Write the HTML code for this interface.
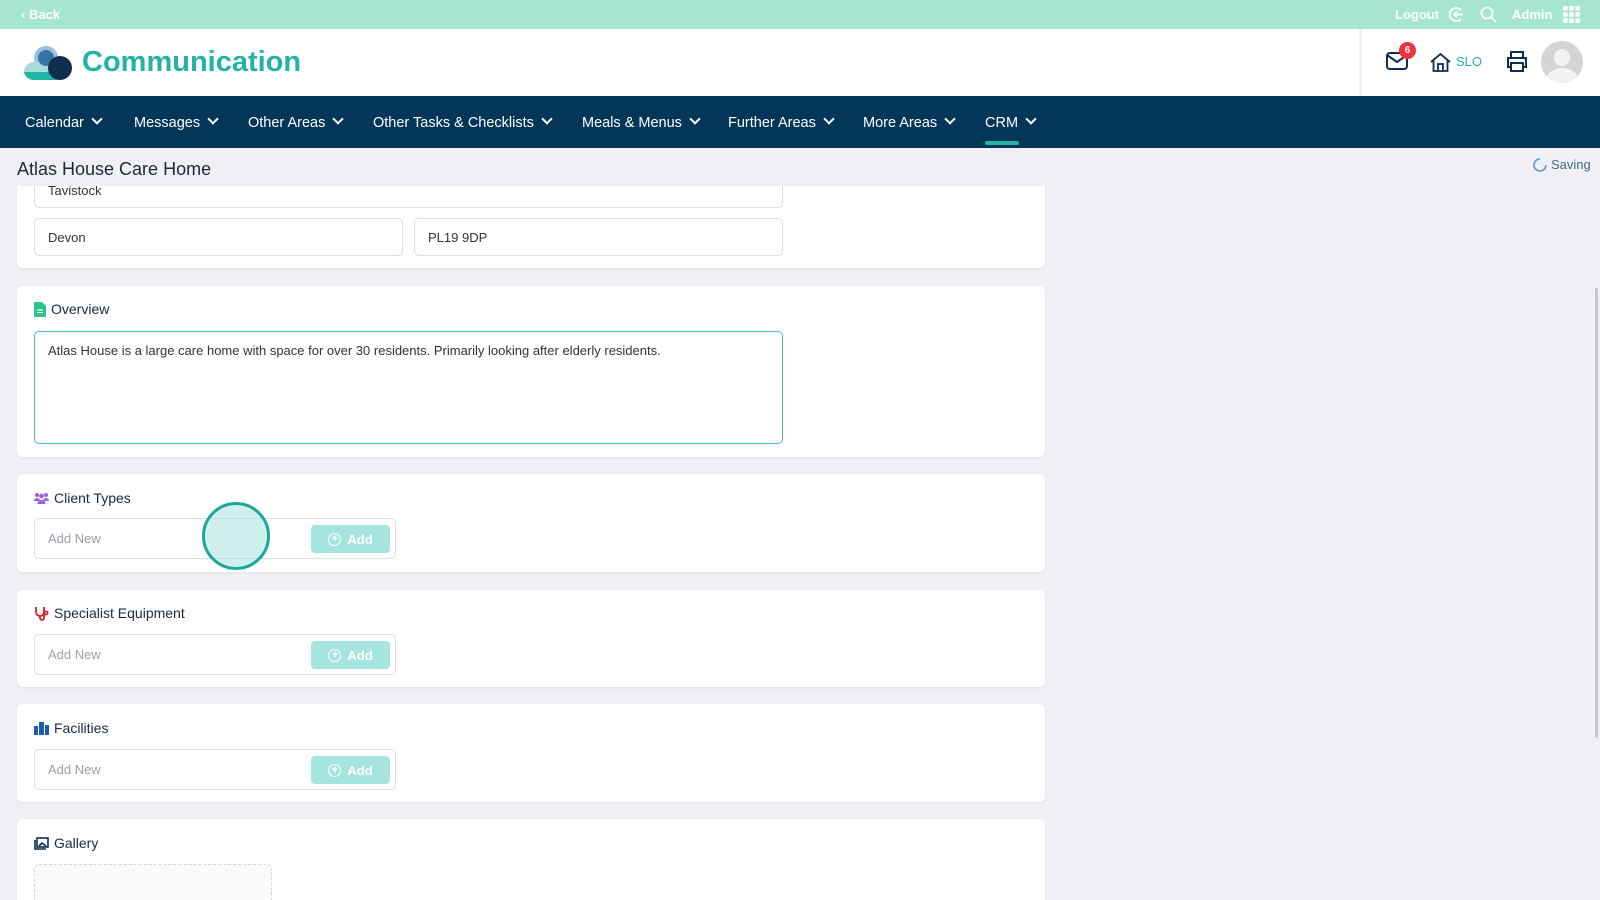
<!DOCTYPE html>
<html><head><meta charset="utf-8"><style>
*{box-sizing:border-box;margin:0;padding:0}
html,body{width:1600px;height:900px;overflow:hidden}
body{background:#f0f0f4;font-family:"Liberation Sans",sans-serif;position:relative;color:#1b2a3a}
.abs{position:absolute}
.top{left:0;top:0;width:1600px;height:29px;background:#a6e6d0;color:#fff;font-size:13px;font-weight:bold}
.hdr{left:0;top:29px;width:1600px;height:67px;background:#fff}
.nav{left:0;top:96px;width:1600px;height:52px;background:#04365a;color:#fff;font-size:14.5px}
.nav span{position:absolute;top:19px;white-space:nowrap}
.nav span:after{content:"";display:inline-block;width:6px;height:6px;border-right:2px solid #fff;border-bottom:2px solid #fff;transform:rotate(45deg);margin-left:9px;position:relative;top:-4px}
.card{position:absolute;left:17px;width:1028px;background:#fff;border-radius:6px;box-shadow:0 1px 3px rgba(0,0,0,.06)}
.inp{position:absolute;background:#fff;border:1px solid #dcdde2;border-radius:5px;font-size:13px;color:#333;padding-left:13px;display:flex;align-items:center}
.h{position:absolute;left:34px;font-size:14px;color:#1b2a3a;display:flex;align-items:center;gap:5px}
.addw{position:absolute;left:34px;width:362px;height:41px;border:1px solid #dcdde2;border-radius:5px;background:#fff}
.addw .ph{position:absolute;left:13px;top:12px;font-size:13px;color:#9aa0a6}
.addw .btn{position:absolute;left:276px;top:6px;width:79px;height:28px;background:#a6e4e0;border-radius:4px;color:#fff;font-size:13px;font-weight:bold;display:flex;align-items:center;justify-content:center;gap:6px}
.addw .btn i{width:13px;height:13px;border:1.5px solid #fff;border-radius:50%;font-style:normal;font-size:11px;line-height:10px;text-align:center}
</style></head><body>
<div class="abs top">
 <span class="abs" style="left:21px;top:7px">‹ Back</span>
 <span class="abs" style="left:1395px;top:7px">Logout</span>
 <svg class="abs" style="left:1448px;top:6px" width="17" height="17" viewBox="0 0 17 17" fill="none" stroke="#fff" stroke-width="1.8"><path d="M13 4A6.5 6.5 0 1 0 13 13"/><path d="M15 8.5H6M9 5.5l-3 3 3 3"/></svg>
 <svg class="abs" style="left:1480px;top:6px" width="17" height="17" viewBox="0 0 17 17" fill="none" stroke="#fff" stroke-width="1.8"><circle cx="7" cy="7" r="5.5"/><path d="M11 11l5 5"/></svg>
 <span class="abs" style="left:1512px;top:7px">Admin</span>
 <svg class="abs" style="left:1563px;top:6px" width="17" height="17" viewBox="0 0 17 17" fill="#fff"><rect x="0" y="0" width="4.5" height="4.5"/><rect x="6.2" y="0" width="4.5" height="4.5"/><rect x="12.4" y="0" width="4.5" height="4.5"/><rect x="0" y="6.2" width="4.5" height="4.5"/><rect x="6.2" y="6.2" width="4.5" height="4.5"/><rect x="12.4" y="6.2" width="4.5" height="4.5"/><rect x="0" y="12.4" width="4.5" height="4.5"/><rect x="6.2" y="12.4" width="4.5" height="4.5"/><rect x="12.4" y="12.4" width="4.5" height="4.5"/></svg>
</div>
<div class="abs hdr">
 <svg class="abs" style="left:24px;top:15px" width="50" height="36" viewBox="0 0 50 36"><circle cx="22" cy="14" r="12" fill="#9cc0dc"/><path d="M0 28a10 10 0 0 1 10-10h24v18H10A10 10 0 0 1 0 28z" fill="#a8dcd8"/><path d="M0 28h34v8H10A10 10 0 0 1 0 28z" fill="#1fb5a8"/><circle cx="22" cy="14" r="8" fill="#1c5f9a" opacity=".8"/><circle cx="36" cy="24" r="12" fill="#0d2e4e"/></svg>
 <span class="abs" style="left:82px;top:17px;font-size:29px;font-weight:bold;color:#23b3a4">Communication</span>
 <div class="abs" style="left:1359px;top:0;width:3px;height:67px;background:#eef0f2"></div>
 <svg class="abs" style="left:1386px;top:23px" width="22" height="18" viewBox="0 0 22 18" fill="none" stroke="#0d2e4e" stroke-width="2"><rect x="1" y="1" width="20" height="16" rx="3"/><path d="M1 3l10 7 10-7"/></svg>
 <div class="abs" style="left:1399px;top:13px;width:17px;height:17px;border-radius:50%;background:#f0323e;color:#fff;font-size:10px;font-weight:bold;text-align:center;line-height:17px">6</div>
 <svg class="abs" style="left:1430px;top:24px" width="21" height="19" viewBox="0 0 21 19" fill="none" stroke="#0d2e4e" stroke-width="1.8"><path d="M1 9L10.5 1 20 9M3.5 7v11h14V7M8 18v-7h5v7"/></svg>
 <span class="abs" style="left:1456px;top:25px;font-size:13px;color:#23b3a4">SLO</span>
 <svg class="abs" style="left:1506px;top:22px" width="22" height="21" viewBox="0 0 22 21" fill="none" stroke="#0d2e4e" stroke-width="2"><path d="M5 7V1h12v6M5 16H2V7h18v9h-3"/><rect x="5" y="12" width="12" height="8"/></svg>
 <div class="abs" style="left:1541px;top:12px;width:42px;height:42px;border-radius:50%;background:#d4d4d4;overflow:hidden"><div class="abs" style="left:13px;top:8px;width:16px;height:17px;border-radius:50%;background:#f2f2f2"></div><div class="abs" style="left:5px;top:27px;width:32px;height:24px;border-radius:50%;background:#f2f2f2"></div></div>
</div>
<div class="abs nav">
 <span style="left:25px">Calendar</span><span style="left:134px">Messages</span><span style="left:248px">Other Areas</span><span style="left:373px">Other Tasks &amp; Checklists</span><span style="left:582px">Meals &amp; Menus</span><span style="left:728px">Further Areas</span><span style="left:863px">More Areas</span><span style="left:985px">CRM</span>
 <div class="abs" style="left:985px;top:45px;width:34px;height:4px;border-radius:2px;background:#23b3a4"></div>
</div>

<div class="card" style="top:150px;height:118px"></div>
<div class="inp" style="left:34px;top:170px;width:749px;height:38px;align-items:flex-start;padding-top:12px">Tavistock</div>
<div class="abs" style="left:0;top:148px;width:1100px;height:38px;background:#f0f0f4"></div>
<span class="abs" style="left:17px;top:159px;font-size:18px;color:#1b2a3a">Atlas House Care Home</span>
<svg class="abs" style="left:1533px;top:158px" width="14" height="14" viewBox="0 0 14 14" fill="none" stroke="#5a9bd0" stroke-width="1.6"><path d="M7 1A6 6 0 1 0 13 7"/></svg>
<span class="abs" style="left:1551px;top:157px;font-size:13px;color:#3d6e94">Saving</span>
<div class="inp" style="left:34px;top:218px;width:369px;height:38px">Devon</div>
<div class="inp" style="left:414px;top:218px;width:369px;height:38px">PL19 9DP</div>

<div class="card" style="top:286px;height:171px"></div>
<div class="h" style="top:301px"><svg width="12" height="15" viewBox="0 0 12 15"><path d="M0 1a1 1 0 0 1 1-1h7l4 4v10a1 1 0 0 1-1 1H1a1 1 0 0 1-1-1z" fill="#2bc48a"/><path d="M3 8h6M3 10.5h6" stroke="#fff" stroke-width="1"/></svg>Overview</div>
<div class="inp" style="left:34px;top:331px;width:749px;height:113px;border-color:#4cc0b5;align-items:flex-start;padding-top:11px">Atlas House is a large care home with space for over 30 residents. Primarily looking after elderly residents.</div>

<div class="card" style="top:474px;height:98px"></div>
<div class="h" style="top:490px"><svg width="15" height="12" viewBox="0 0 15 12" fill="#9b5de5"><circle cx="3" cy="3" r="2"/><circle cx="12" cy="3" r="2"/><circle cx="7.5" cy="4" r="2.3"/><path d="M0 9a3 3 0 0 1 6 0zM9 9a3 3 0 0 1 6 0zM3.5 12a4 4 0 0 1 8 0z"/></svg>Client Types</div>
<div class="addw" style="top:518px"><span class="ph">Add New</span><div class="btn"><i>+</i>Add</div></div>

<div class="card" style="top:590px;height:97px"></div>
<div class="h" style="top:605px"><svg width="15" height="15" viewBox="0 0 15 15" fill="none" stroke="#d3202e" stroke-width="1.8"><path d="M2 1v5a4 4 0 0 0 8 0V1M6 10v2a2 2 0 0 0 4 0V9"/><circle cx="12" cy="7" r="1.6"/></svg>Specialist Equipment</div>
<div class="addw" style="top:634px"><span class="ph">Add New</span><div class="btn"><i>+</i>Add</div></div>

<div class="card" style="top:704px;height:98px"></div>
<div class="h" style="top:720px"><svg width="15" height="13" viewBox="0 0 15 13" fill="#1c5fa8"><rect x="0" y="4" width="4" height="9"/><rect x="5" y="0" width="5" height="13"/><rect x="11" y="3" width="4" height="10"/></svg>Facilities</div>
<div class="addw" style="top:749px"><span class="ph">Add New</span><div class="btn"><i>+</i>Add</div></div>

<div class="card" style="top:819px;height:81px;border-radius:6px 6px 0 0"></div>
<div class="h" style="top:835px"><svg width="15" height="13" viewBox="0 0 15 13" fill="none" stroke="#0d2e4e" stroke-width="1.6"><rect x="3" y="1" width="11" height="9"/><path d="M1 3v9h11"/><path d="M5 9l3-3 4 3" /></svg>Gallery</div>
<div class="abs" style="left:34px;top:864px;width:238px;height:36px;border:1.5px dashed #d4d6da;border-bottom:none;border-radius:5px 5px 0 0;background:#fafafa"></div>

<div class="abs" style="left:202px;top:502px;width:68px;height:68px;border-radius:50%;border:3px solid #1aa89a;background:rgba(160,225,218,.5)"></div>
<div class="abs" style="left:1595px;top:288px;width:3px;height:450px;border-radius:2px;background:#c4c6ca"></div>
</body></html>
